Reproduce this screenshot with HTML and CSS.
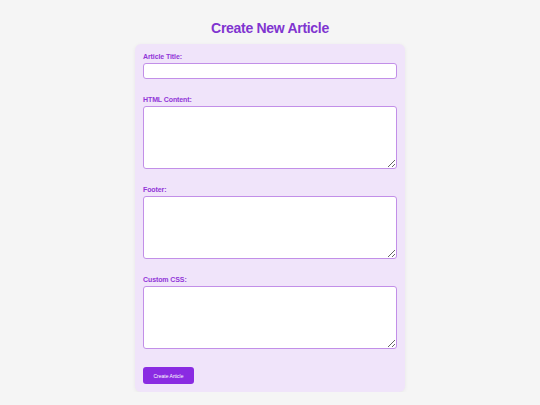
FILE: index.html
```html
<!DOCTYPE html>
<html lang="en">
<head>
<meta charset="utf-8">
<title>Create New Article</title>
<link rel="stylesheet" href="styles.css">
</head>
<body>
<div class="page">
  <h1 class="title">Create New Article</h1>
  <form class="card">
    <div class="group">
      <label class="label" for="t">Article Title:</label>
      <input class="field input" id="t" type="text">
    </div>
    <div class="group">
      <label class="label" for="h">HTML Content:</label>
      <textarea class="field area" id="h"></textarea>
    </div>
    <div class="group">
      <label class="label" for="f">Footer:</label>
      <textarea class="field area" id="f"></textarea>
    </div>
    <div class="group last">
      <label class="label" for="c">Custom CSS:</label>
      <textarea class="field area" id="c"></textarea>
    </div>
    <button class="btn" type="button">Create Article</button>
  </form>
</div>
</body>
</html>
```

FILE: styles.css
```css
html, body {
  margin: 0;
  padding: 0;
  background: #f5f5f5;
  font-family: "Liberation Sans", Arial, sans-serif;
}
.page {
  padding-top: 18px;
}
.title {
  margin: 0 0 6px;
  font-size: 14px;
  letter-spacing: -0.3px;
  line-height: 20px;
  font-weight: bold;
  color: #8034d0;
  text-align: center;
}
.card {
  width: 254px;
  margin: 0 auto;
  padding: 8px 8px 8px;
  background: #f0e4fa;
  border-radius: 6px;
  box-shadow: 0 1px 4px rgba(0, 0, 0, 0.06);
}
.group {
  margin-bottom: 16px;
}
.group.last {
  margin-bottom: 18px;
}
.label {
  display: block;
  font-size: 7px;
  letter-spacing: -0.1px;
  line-height: 10px;
  font-weight: bold;
  color: #9236d8;
  margin-bottom: 1px;
}
.field {
  display: block;
  width: 100%;
  box-sizing: border-box;
  margin: 0;
  border: 1px solid #c28fe8;
  border-radius: 3px;
  background: #fff;
  font-family: inherit;
  font-size: 8px;
  padding: 2px 4px;
}
.input {
  height: 16px;
}
.area {
  height: 63px;
  resize: vertical;
}
.btn {
  display: block;
  width: 51px;
  height: 17px;
  padding: 0;
  border: none;
  border-radius: 3px;
  background: #8a2be2;
  color: #fff;
  font-family: inherit;
  font-size: 5px;
}
```
